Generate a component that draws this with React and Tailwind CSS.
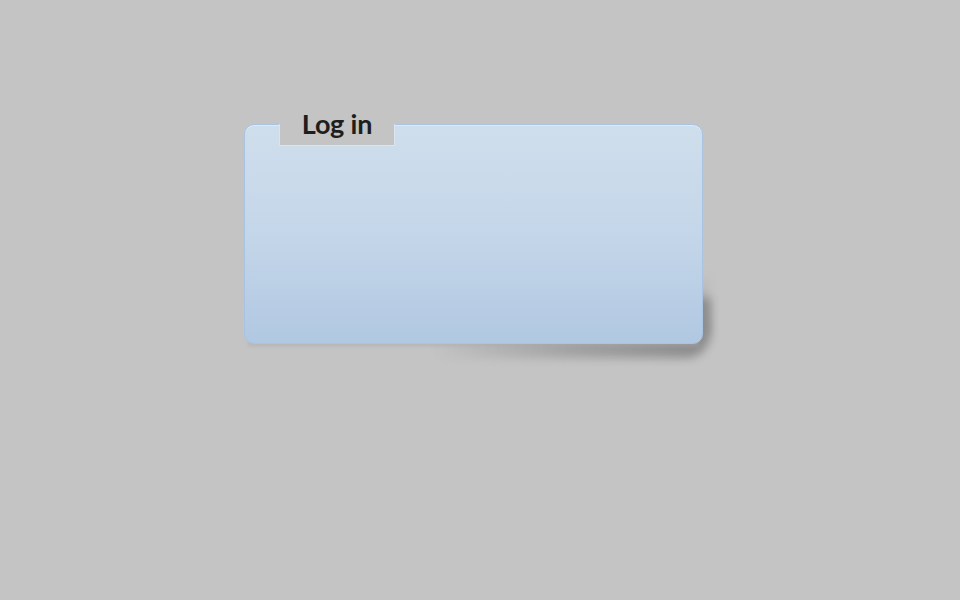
export default function App() {
  return (
    <div className="w-[960px] h-[600px] bg-[#c4c4c4] pt-[124px] pl-[244px] overflow-hidden" style={{ fontFamily: "Lato, 'Open Sans', sans-serif" }}>
      <div className="relative w-[459px] h-[220px]">
        <div className="absolute right-[-7px] bottom-[-14px] w-[280px] h-[60px] bg-linear-to-r from-transparent via-[#9a9a9a] to-[#7c7c7c] blur-[5px] rounded-br-[24px] opacity-80"></div>
        <div className="absolute right-[-7px] bottom-[10px] w-[20px] h-[60px] bg-linear-to-b from-transparent to-[#8c8c8c] blur-[4px] opacity-70"></div>
        <div className="absolute left-[4px] right-[4px] bottom-[-2px] h-[5px] bg-[#a8a8a8] blur-[2px] opacity-60"></div>
        <div className="relative w-full h-full rounded-[10px] border border-[#a9c4e2] bg-linear-to-b from-[#cfdeec] via-[#c4d6e9] to-[#b1c8e2] shadow-[inset_0_1px_0_rgba(255,255,255,0.35)]"></div>
        <div className="absolute left-[35px] top-0 w-[116px] h-[22px] bg-[#c4c4c4] border-l border-r border-b border-[#d8e4f0]"></div>
        <div className="absolute left-[35px] top-[-16px] w-[116px] text-center text-[27px] leading-[32px] font-bold text-[#1e1e1e] tracking-[-0.2px]">Log in</div>
      </div>
    </div>
  );
}
